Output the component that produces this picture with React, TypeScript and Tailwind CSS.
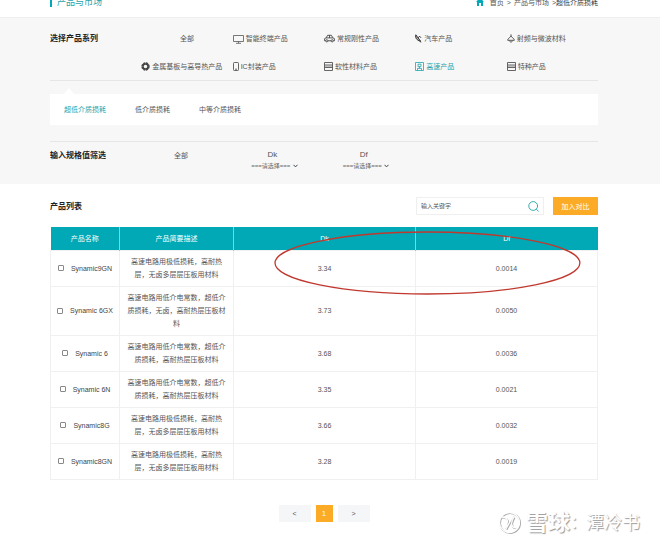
import type { ReactNode } from "react";

function MonitorIcon() {
  return (
    <svg className="h-[10px] w-[11px] shrink-0" viewBox="0 0 11 10" fill="none" stroke="currentColor" strokeWidth="0.8">
      <path d="M0.5 1.5h10v6h-10zM5.5 7.5v1.6M3 9.3h5" />
    </svg>
  );
}

function CarIcon() {
  return (
    <svg className="h-[9px] w-[11px] shrink-0" viewBox="0 0 11 9" fill="none" stroke="#444" strokeWidth="0.9">
      <path d="M1.6 6.8H0.6V4.6l1.6-.8L3.6 1.3h3.8l1.4 2.5 1.6.8v2.2H9.4M4 6.8h3M2.2 3.9h6.6M5.5 1.3v2.6" />
      <circle cx="2.8" cy="6.8" r="1.1" />
      <circle cx="8.2" cy="6.8" r="1.1" />
    </svg>
  );
}

function DishIcon() {
  return (
    <svg className="h-[9px] w-[7px] shrink-0" viewBox="0 0 7 9" fill="none" stroke="#333" strokeWidth="1">
      <path d="M0.8 0.8C0 3.6 1.8 6.6 5.6 7.2z" fill="#333" fillOpacity="0.35" />
      <path d="M3.2 3.8L4.6 2.2L6 3.8M4.4 6.8L6.2 8.4" />
    </svg>
  );
}

function LampIcon() {
  return (
    <svg className="h-[9px] w-[8px] shrink-0" viewBox="0 0 8 9" fill="none" stroke="currentColor" strokeWidth="1">
      <path d="M4 0.3v2.2M0.7 6.3c0-1.7 1.6-2.3 3.3-4.1C5.7 4 7.3 4.6 7.3 6.3zM2.6 6.6c0.3 2 2.5 2 2.8 0" />
    </svg>
  );
}

function WheelIcon() {
  return (
    <svg className="h-[9px] w-[9px] shrink-0" viewBox="0 0 9 9" fill="none" stroke="#444">
      <circle cx="4.5" cy="4.5" r="3.5" strokeWidth="1.4" strokeDasharray="2.15 0.6" />
      <circle cx="4.5" cy="4.5" r="2.5" strokeWidth="1.4" />
    </svg>
  );
}

function PhoneIcon() {
  return (
    <svg className="h-[9px] w-[6px] shrink-0" viewBox="0 0 6 9" fill="none" stroke="currentColor" strokeWidth="0.9">
      <rect x="0.5" y="0.5" width="5" height="8" rx="0.8" />
      <path d="M2 7.2h2" />
    </svg>
  );
}

function LayersIcon() {
  return (
    <svg className="h-[9px] w-[9px] shrink-0" viewBox="0 0 9 9" fill="none" stroke="currentColor" strokeWidth="0.9">
      <path d="M0.5 0.5h8v8h-8zM0.5 3h8M0.5 5.5h8" />
      <path d="M0.5 4.3h8" strokeOpacity="0.5" />
    </svg>
  );
}

function BoardIcon() {
  return (
    <svg className="h-[9px] w-[9px] shrink-0" viewBox="0 0 9 9" fill="none" stroke="currentColor" strokeWidth="0.8">
      <path d="M0.5 0.5h8v8h-8zM3 2.2h3v2.4H3zM2.5 8.5V6.4h4v2.1M4.5 4.6v1.8" />
    </svg>
  );
}

type Category = { label: string; icon?: ReactNode; place: string };

const categories: Category[] = [
  { label: "全部", place: "col-start-2 justify-center" },
  { label: "智能终端产品", icon: <MonitorIcon />, place: "" },
  { label: "常规刚性产品", icon: <CarIcon />, place: "" },
  { label: "汽车产品", icon: <DishIcon />, place: "" },
  { label: "射频与微波材料", icon: <LampIcon />, place: "" },
  { label: "金属基板与高导热产品", icon: <WheelIcon />, place: "col-start-2" },
  { label: "IC封装产品", icon: <PhoneIcon />, place: "" },
  { label: "软性材料产品", icon: <LayersIcon />, place: "" },
  { label: "高速产品", icon: <BoardIcon />, place: "text-[#1fa3ab]" },
  { label: "特种产品", icon: <LayersIcon />, place: "" },
];

const lowLoss = "高速电路用极低损耗，高耐热层，无卤多层层压板用材料";
const lowDk = "高速电路用低介电常数，超低介质损耗，高耐热层压板材料";

const products = [
  { name: "Synamic9GN", text: lowLoss, dk: "3.34", df: "0.0014" },
  { name: "Synamic 6GX", text: "高速电路用低介电常数，超低介质损耗，无卤，高耐热层压板材料", dk: "3.73", df: "0.0050" },
  { name: "Synamic 6", text: lowDk, dk: "3.68", df: "0.0036" },
  { name: "Synamic 6N", text: lowDk, dk: "3.35", df: "0.0021" },
  { name: "Synamic8G", text: lowLoss, dk: "3.66", df: "0.0032" },
  { name: "Synamic8GN", text: lowLoss, dk: "3.28", df: "0.0019" },
];

function Filter({ name }: { name: string }) {
  return (
    <div className="-ml-3 flex flex-col items-center">
      <label htmlFor={name} className="text-[8px] leading-3">{name}</label>
      <div className="ml-1 flex items-center">
        <select id={name} className="appearance-none bg-transparent text-center text-[6px] leading-[10px] text-[#666]">
          <option>===请选择===</option>
        </select>
        <svg className="ml-[2px] h-[4px] w-[5px]" viewBox="0 0 5 4" fill="none" stroke="#444" strokeWidth="1">
          <path d="M0.5 0.8L2.5 2.9L4.5 0.8" />
        </svg>
      </div>
    </div>
  );
}

export default function App() {
  return (
    <div
      lang="zh-CN"
      className="relative min-h-screen overflow-hidden bg-white font-['Liberation_Sans','Noto_Sans_CJK_SC',sans-serif] text-[7px] leading-[13px] text-[#555]"
    >
      <header className="flex h-[17px] items-start justify-between pr-[62px] pl-[50px]">
        <div className="-mt-1 flex h-3 items-center gap-[5px] text-[9px] text-[#1fa3ab]">
          <span className="h-[9px] w-[2px] bg-[#00a9b5]" />
          <h1>产品与市场</h1>
        </div>
        <nav className="-mt-1 flex h-3 items-center">
          <svg className="mr-[6px] h-[8px] w-[8px]" viewBox="0 0 8 8" fill="#00a9b5">
            <path d="M4 0L8 3.8H7V8H5V5H3V8H1V3.8H0z" />
          </svg>
          <a href="#home">首页</a>
          <span className="px-[3px]">&gt;</span>
          <a href="#market">产品与市场</a>
          <span className="pl-[3px]">&gt;</span>
          <span className="text-[#333]">超低介质损耗</span>
        </nav>
      </header>

      <section className="border-t border-[#efefef] bg-[#f7f7f7] pr-[62px] pb-[13px] pl-[50px]">
        <div className="relative border-b border-[#e6e6e6] pt-[14px] pb-[7px]">
          <h2 className="absolute text-[8px] font-bold text-[#222]">选择产品系列</h2>
          <div className="grid grid-cols-6 gap-y-[15px]">
            {categories.map((c) => (
              <a key={c.label} href="#category" className={`flex items-center gap-[2px] whitespace-nowrap ${c.place}`}>
                {c.icon}
                {c.label}
              </a>
            ))}
          </div>
        </div>
        <div className="ml-[14px] h-[13px] pt-[7px]">
          <svg className="h-[6px] w-[10px]" viewBox="0 0 10 6" fill="#fff">
            <path d="M5 0L10 6H0z" />
          </svg>
        </div>
        <nav className="flex h-[31px] items-center gap-[29px] bg-white px-[14px]">
          <a href="#ultra-low" className="text-[#1fa3ab]">超低介质损耗</a>
          <a href="#low">低介质损耗</a>
          <a href="#medium">中等介质损耗</a>
        </nav>
        <div className="mt-4 grid grid-cols-6 border-t border-[#e6e6e6] pt-[7px]">
          <h2 className="text-[8px] font-bold text-[#222]">输入规格值筛选</h2>
          <a href="#all" className="-ml-3 text-center">全部</a>
          <Filter name="Dk" />
          <Filter name="Df" />
        </div>
      </section>

      <main className="pr-[62px] pl-[50px]">
        <div className="flex items-center pt-[13px] pb-3">
          <h2 className="mr-auto text-[8px] font-bold text-[#222]">产品列表</h2>
          <form className="mr-[9px] flex h-[18px] w-[128px] items-center border border-[#efefef] px-1">
            <input
              aria-label="输入关键字"
              placeholder="输入关键字"
              className="min-w-0 flex-1 text-[6px] leading-3 outline-none placeholder:text-[#555]"
            />
            <button type="button" aria-label="搜索">
              <svg className="h-[11px] w-[11px]" viewBox="0 0 11 11" fill="none" stroke="#1fa3ab" strokeWidth="0.9">
                <circle cx="5.2" cy="5" r="4.4" />
                <path d="M8.3 8.1L10.5 10.5" />
              </svg>
            </button>
          </form>
          <button type="button" className="h-[18px] w-[45px] bg-[#fbab25] text-white">加入对比</button>
        </div>

        <div className="relative">
          <table className="w-full table-fixed border-collapse text-center">
            <thead>
              <tr className="h-[23px] bg-[#00a9b5] text-white">
                <th className="w-[69px] border-r border-[#7fd4da] font-normal">产品名称</th>
                <th className="w-[114px] border-r border-[#7fd4da] font-normal">产品简要描述</th>
                <th className="border-r border-[#7fd4da] font-normal">Dk</th>
                <th className="font-normal">Df</th>
              </tr>
            </thead>
            <tbody>
              {products.map((p) => (
                <tr key={p.name}>
                  <td className="border border-[#f0f0f0]">
                    <label className="flex items-center justify-center gap-[7px] whitespace-nowrap text-[#444]">
                      <input type="checkbox" className="h-[6px] w-[6px] appearance-none rounded-[1px] border border-[#888] checked:bg-[#00a9b5]" />
                      {p.name}
                    </label>
                  </td>
                  <td className="border border-[#f0f0f0] px-[6px] pt-[4px] pb-[5px]">{p.text}</td>
                  <td className="border border-[#f0f0f0]">{p.dk}</td>
                  <td className="border border-[#f0f0f0]">{p.df}</td>
                </tr>
              ))}
            </tbody>
          </table>
          <svg
            className="pointer-events-none absolute top-[4px] left-[41%] h-[64px] w-[56%] overflow-visible"
            viewBox="0 0 308 64"
            preserveAspectRatio="none"
            fill="none"
            stroke="#c0392f"
            strokeWidth="1.3"
          >
            <ellipse cx="153" cy="32" rx="153" ry="31" />
          </svg>
        </div>

        <nav className="mt-[25px] flex justify-center gap-[5px] pb-5">
          <button type="button" className="h-[17px] w-[32px] bg-[#f5f6f8]">&lt;</button>
          <button type="button" className="h-[17px] w-[17px] bg-[#fbab25] text-white">1</button>
          <button type="button" className="h-[17px] w-[32px] bg-[#f5f6f8]">&gt;</button>
        </nav>
      </main>

      <div className="absolute right-[20px] bottom-[8px] flex items-center text-white [text-shadow:1px_1px_1px_#999]">
        <svg className="mr-1 h-[24px] w-[24px]" viewBox="0 0 24 24" fill="none">
          <g stroke="#a8a8a8" strokeWidth="1.6" transform="translate(0.7 0.7)">
            <circle cx="11.5" cy="11.5" r="10" />
            <path d="M4 6c6 0 7 5 3 11M19 17c-6 0-7-5-3-11M8 18l7-13" />
          </g>
          <g stroke="#fff" strokeWidth="1.3">
            <circle cx="11.5" cy="11.5" r="10" />
            <path d="M4 6c6 0 7 5 3 11M19 17c-6 0-7-5-3-11M8 18l7-13" />
          </g>
        </svg>
        <span className="text-[22px] leading-6 font-bold">雪球</span>
        <span className="text-[16px] leading-6">：</span>
        <span className="text-[18px] leading-6">潭冷书</span>
      </div>
    </div>
  );
}
